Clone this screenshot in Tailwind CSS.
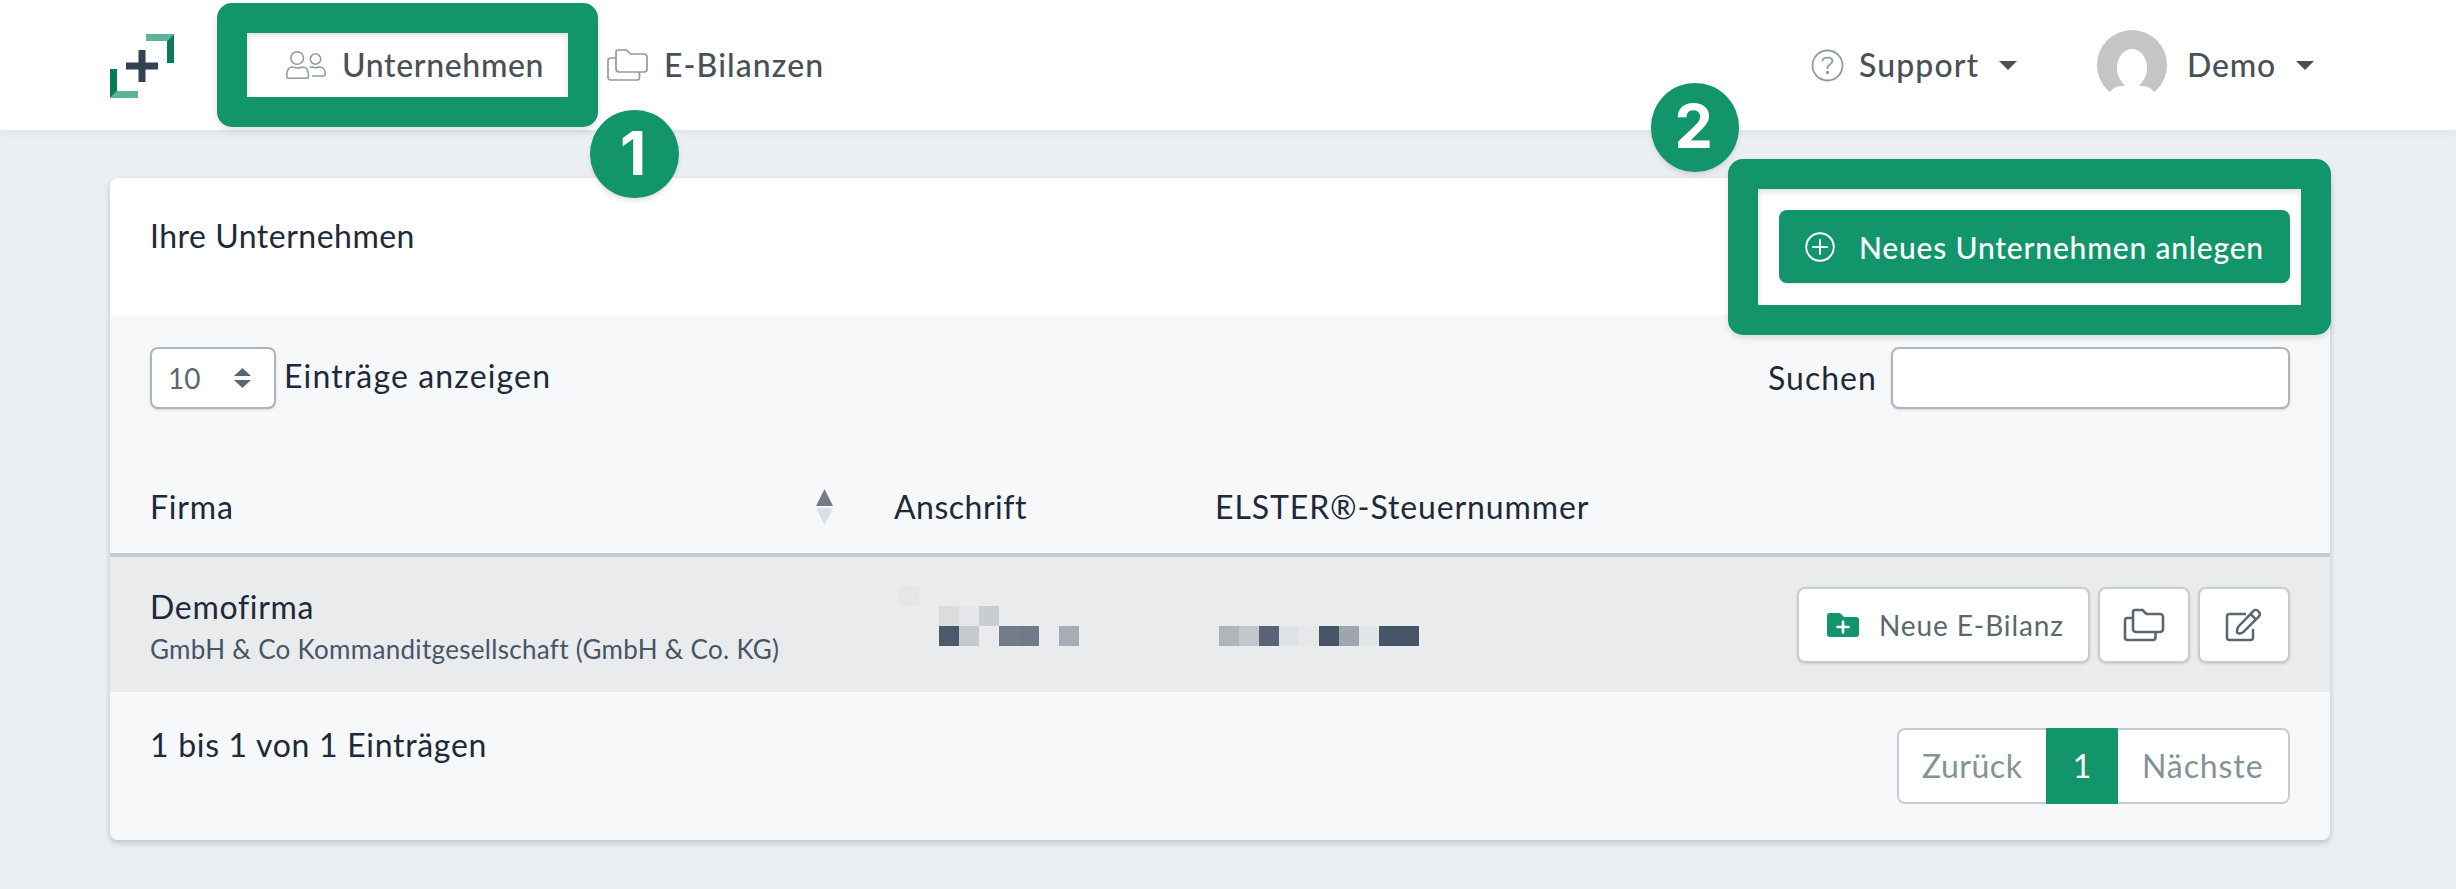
<!DOCTYPE html>
<html lang="de">
<head>
  <meta charset="UTF-8" />
  <meta name="viewport" content="width=device-width, initial-scale=1.0"/>
  <title>Unternehmen</title>
  <script src="https://cdn.jsdelivr.net/npm/@tailwindcss/browser@4"></script>
</head>
<body class="w-[2456px] h-[889px] overflow-hidden bg-[#ebeff2] font-['Lato','Noto_Sans',sans-serif] text-[32px] leading-[48px] text-[#1e293b] whitespace-nowrap relative">

  <!-- Navigation -->
  <header class="h-[130px] pl-[110px] pr-[142px] flex items-center bg-white shadow-[0_2px_10px_rgba(0,0,0,0.06)] text-[#495057] font-medium">
    <svg class="w-16 h-16 mt-0.5" viewBox="0 0 64 64">
      <path d="M36 0h28l-7 7H36z" fill="#5cb595"/>
      <path d="M64 0v29h-7V7z" fill="#0b7a5a"/>
      <path d="M28 64H0l7-7h21z" fill="#5cb595"/>
      <path d="M0 64V35h7v22z" fill="#0b7a5a"/>
      <path d="M28.500 16h7v12.500H48v7H35.500V48h-7V35.500H16v-7h12.500z" fill="#334155"/>
    </svg>
    <a class="ml-[111px] flex items-center" href="#">
      <svg class="w-[42px] h-[30px]" viewBox="0 0 42 30" fill="none" stroke="#929a9e" stroke-width="1.6">
        <circle cx="12.2" cy="8" r="6.3"/>
        <circle cx="30.5" cy="9" r="5.2"/>
        <path d="M4 28.3h17.500a2 2 0 0 0 2-2c0-6-2-9.300-5.500-9.300-2 0-3 1-5.300 1s-3.400-1-5.400-1c-3.600 0-5.600 3.300-5.600 9.300a2 2 0 0 0 2.300 2z"/>
        <path d="M24.500 17.500c1-.5 2-.6 3-.4 1 .3 1.700.6 3 .6s2.300-.7 4-.7c3.500 0 5.700 3 5.700 7 0 1.500-.7 2-2 2H27"/>
      </svg>
      <span class="ml-[15px] w-[265px] tracking-[0.65px]">Unternehmen</span>
    </a>
    <a class="flex items-center" href="#">
      <svg class="w-[42px] h-[34px]" viewBox="0 0 42 34" fill="none" stroke="#929a9e" stroke-width="1.7" stroke-linejoin="round">
        <path d="M11 2h8.500l4 4H37a3 3 0 0 1 3 3v12a3 3 0 0 1-3 3H12a3 3 0 0 1-3-3V4a2 2 0 0 1 2-2z"/>
        <path d="M9 10H3.500A2.500 2.500 0 0 0 1 12.500v17A2.500 2.500 0 0 0 3.500 32H30a2.500 2.500 0 0 0 2.500-2.500V24"/>
      </svg>
      <span class="ml-[15px] tracking-[1.1px]">E-Bilanzen</span>
    </a>
    <div class="ml-auto flex items-center">
      <svg class="w-[33px] h-[33px]" viewBox="0 0 33 33" fill="none" stroke="#929a9e" stroke-width="1.8">
        <circle cx="16.500" cy="16.500" r="15"/>
        <path d="M11.500 11.500c1-4 10-4 10 .5 0 3.500-5 3-5 7" stroke-linecap="round"/>
        <circle cx="16.500" cy="23.500" r=".8" fill="#868e93"/>
      </svg>
      <span class="ml-[15px] w-[140px] tracking-[1.1px]">Support</span>
      <svg class="w-[18px] h-[9px]" viewBox="0 0 18 9"><path d="M0 0h18L9 9z" fill="#495057"/></svg>
      <svg class="ml-[80px] w-[70px] h-[70px]" viewBox="0 0 70 70">
        <circle cx="35" cy="35" r="35" fill="#c5c5c5"/>
        <ellipse cx="35" cy="38" rx="15" ry="19" fill="#fff"/>
        <path d="M12 64c2-5 7-8 13-8 4-1 5-2 4-5h12c-1 3 0 4 4 5 6 0 11 3 13 8v6H12z" fill="#fff"/>
      </svg>
      <span class="ml-[20px] w-[109px] tracking-[0.8px]">Demo</span>
      <svg class="w-[18px] h-[9px]" viewBox="0 0 18 9"><path d="M0 0h18L9 9z" fill="#495057"/></svg>
    </div>
  </header>

  <!-- Karte -->
  <main class="mt-12 ml-[110px] w-[2220px] h-[662px] rounded-lg overflow-hidden bg-[#f7f8fa] shadow-[0_3px_6px_rgba(0,0,0,0.18)]">
    <div class="h-[137px] pl-10 pr-10 flex justify-between bg-white">
      <h1 class="pt-[34px] tracking-[0.5px]">Ihre Unternehmen</h1>
      <button class="mt-8 w-[511px] h-[73px] pl-[26px] flex items-center rounded-lg bg-[#12956b] text-white font-medium text-[30px] shadow">
        <svg class="w-[30px] h-[30px]" viewBox="0 0 30 30" fill="none" stroke="#fff" stroke-width="2" stroke-linecap="round">
          <circle cx="15" cy="15" r="13.800"/>
          <path d="M15 8v14M8 15h14"/>
        </svg>
        <span class="ml-6 tracking-[0.8px]">Neues Unternehmen anlegen</span>
      </button>
    </div>

    <div class="h-[122px] pt-8 px-10 flex justify-between">
      <div class="flex">
        <div class="w-[126px] h-[62px] pl-[16px] pr-[23px] flex items-center justify-between rounded-lg border-2 border-[#adb5bd] bg-white text-[28px] text-[#5b676e] shadow">
          <span>10</span>
          <svg class="w-[17px] h-5" viewBox="0 0 17 20"><path d="M0 8h17L8.500 0zM0 12h17l-8.500 8z" fill="#5b676e"/></svg>
        </div>
        <span class="ml-[8px] pt-[5px] tracking-[1.15px]">Einträge anzeigen</span>
      </div>
      <label class="flex">
        <span class="w-[123px] pt-[7px] tracking-[1px]">Suchen</span>
        <input type="text" class="w-[399px] h-[62px] rounded-lg border-2 border-[#adb5bd] bg-white shadow-sm">
      </label>
    </div>

    <div class="h-[120px] pl-10 pt-[46px] grid grid-cols-[744px_321px_1fr] border-b-4 border-[#c6ccd1]">
      <div class="flex justify-between pr-[61px]">
        <span class="tracking-[0.8px]">Firma</span>
        <svg class="mt-1.5 w-[17px] h-9" viewBox="0 0 17 36"><path d="M8.500 0L17 17H0z" fill="#737d87"/><path d="M8.500 36L0 19h17z" fill="#dcdfe2"/></svg>
      </div>
      <span class="tracking-[0.5px]">Anschrift</span>
      <span class="tracking-[0.9px]">ELSTER®-Steuernummer</span>
    </div>

    <div class="h-[135px] pl-10 pr-10 grid grid-cols-[749px_320px_1fr] bg-[#e9ebec]">
      <div class="pt-[26px]">
        <div class="tracking-[0.7px]">Demofirma</div>
        <div class="-mt-1 text-[26px] leading-[44px] text-[#475569] tracking-[0.3px]">GmbH &amp; Co Kommanditgesellschaft (GmbH &amp; Co. KG)</div>
      </div>
      <!-- verpixelte Daten -->
      <div class="pt-[29px] grid grid-cols-[repeat(9,20px)] grid-rows-[repeat(3,20px)]">
        <i class="bg-[#e6e7e9] col-start-1 row-start-1"></i>
        <i class="bg-[#dadcde] col-start-3 row-start-2"></i>
        <i class="bg-[#e5e7ea] col-start-4 row-start-2"></i>
        <i class="bg-[#c9cdd0] col-start-5 row-start-2"></i>
        <i class="bg-[#4b596b] col-start-3 row-start-3"></i>
        <i class="bg-[#c6cacf] col-start-4 row-start-3"></i>
        <i class="bg-[#737d87] col-start-6 row-start-3"></i>
        <i class="bg-[#717a89] col-start-7 row-start-3"></i>
        <i class="bg-[#a9adb6] col-start-9 row-start-3"></i>
      </div>
      <div class="flex justify-between">
        <div class="mt-[69px] h-5 flex">
          <i class="w-5 bg-[#afb5b9]"></i>
          <i class="w-5 bg-[#c3c7cc]"></i>
          <i class="w-5 bg-[#5a6477]"></i>
          <i class="w-5 bg-[#dfe3e6]"></i>
          <i class="w-5 bg-[#e7e8ea]"></i>
          <i class="w-5 bg-[#465567]"></i>
          <i class="w-5 bg-[#9ea5ad]"></i>
          <i class="w-5 bg-[#e1e6e7]"></i>
          <i class="w-10 bg-[#465567]"></i>
        </div>
        <div class="mt-[30px] flex gap-2 text-[28px] text-[#5b676e]">
          <button class="w-[293px] h-[76px] pl-7 flex items-center rounded-lg border-2 border-[#c6ccd1] bg-white shadow-sm">
            <svg class="w-8 h-6" viewBox="0 0 32 24">
              <path d="M3 0h10l4 4h12a3 3 0 0 1 3 3v14a3 3 0 0 1-3 3H3a3 3 0 0 1-3-3V3a3 3 0 0 1 3-3z" fill="#12956b"/>
              <path d="M16 8.500v11M10.500 14h11" stroke="#fff" stroke-width="2.600" stroke-linecap="round"/>
            </svg>
            <span class="ml-5 tracking-[0.9px]">Neue E-Bilanz</span>
          </button>
          <button class="w-[92px] h-[76px] flex items-center justify-center rounded-lg border-2 border-[#c6ccd1] bg-white shadow-sm">
            <svg class="w-[42px] h-[34px]" viewBox="0 0 42 34" fill="none" stroke="#5b676e" stroke-width="2.600" stroke-linejoin="round">
              <path d="M12 2h7.500l4 4H37a3 3 0 0 1 3 3v12a3 3 0 0 1-3 3H13a3 3 0 0 1-3-3V4a2 2 0 0 1 2-2z"/>
              <path d="M10 10H4.500A2.500 2.500 0 0 0 2 12.500v17A2.500 2.500 0 0 0 4.500 32H30a2.500 2.500 0 0 0 2.500-2.500V24"/>
            </svg>
          </button>
          <button class="w-[92px] h-[76px] flex items-center justify-center rounded-lg border-2 border-[#c6ccd1] bg-white shadow-sm">
            <svg class="w-[38px] h-[34px]" viewBox="0 0 38 34" fill="none" stroke="#5b676e" stroke-width="2.500" stroke-linejoin="round">
              <path d="M21 6H4.500A2.500 2.500 0 0 0 2 8.500v21A2.500 2.500 0 0 0 4.500 32h21a2.500 2.500 0 0 0 2.500-2.500V21"/>
              <path d="M28.500 2.800c1.500-1.500 3.500-1 5 .5s2 3.500.5 5L18.500 23.800c-1 1-4 1.700-5.500 1.500-.7-.1-1-.5-1-1.300 0-1.600.5-4.500 1.500-5.500zM25.500 6l5.800 5.800"/>
            </svg>
          </button>
        </div>
      </div>
    </div>

    <div class="px-10 flex justify-between">
      <span class="pt-[29px] tracking-[0.7px]">1 bis 1 von 1 Einträgen</span>
      <nav class="mt-9 w-[393px] h-[76px] flex text-[#84929a] leading-[76px]">
        <a class="w-[149px] pl-[23px] rounded-l-lg border-2 border-r-0 border-[#c6ccd1] bg-white leading-[72px] tracking-[0.5px]">Zurück</a>
        <a class="w-[72px] text-center bg-[#12956b] text-white">1</a>
        <a class="flex-1 pl-[24px] rounded-r-lg border-2 border-l-0 border-[#c6ccd1] bg-white leading-[72px] tracking-[0.9px]">Nächste</a>
      </nav>
    </div>
  </main>

  <!-- Markierungen über der Oberfläche -->
  <div class="absolute left-[217px] top-[2.5px] w-[381px] h-[124px] rounded-[15px] border-[30px] border-[#12956b] drop-shadow-md"></div>
  <div class="absolute left-[590px] top-[109.5px] w-[88.500px] h-[88.500px] pr-0.5 rounded-full bg-[#12956b] shadow-md text-white font-['Inter',sans-serif] font-bold text-[61px] leading-[87px] text-center">1</div>
  <div class="absolute left-[1728px] top-[158.5px] w-[602.500px] h-[176.500px] rounded-[15px] border-[30px] border-[#12956b] drop-shadow-md"></div>
  <div class="absolute left-[1650.500px] top-[83px] w-[88.500px] h-[88.500px] pr-0.5 rounded-full bg-[#12956b] shadow-md text-white font-['Inter',sans-serif] font-bold text-[61px] leading-[87px] text-center">2</div>
</body>
</html>
